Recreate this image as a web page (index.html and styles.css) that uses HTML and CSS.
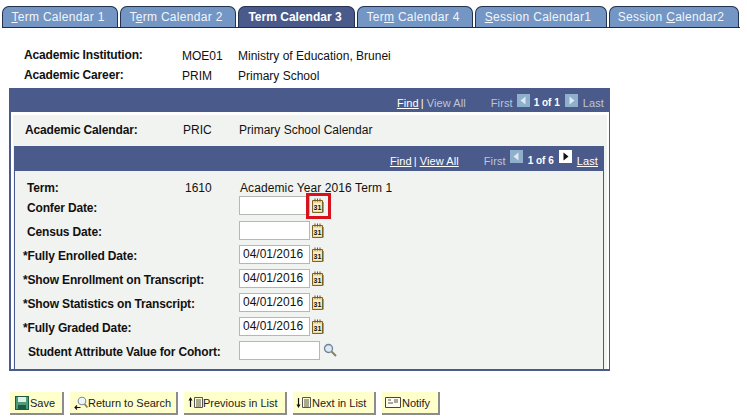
FILE: index.html
```html
<!DOCTYPE html>
<html lang="en">
<head>
<meta charset="utf-8">
<title>Term Calendar 3</title>
<link rel="stylesheet" href="styles.css">
</head>
<body>
<svg class="defs" width="0" height="0">
  <defs>
    <symbol id="cal" viewBox="0 0 12 15">
      <path d="M.5 2.500h10v12H.500z" fill="#f0d9a0" stroke="#7d6228"/>
      <path d="M11.500 4v10.500" stroke="#b89a5a"/>
      <path d="M3 .5v3M5.500 .5v3M8 .5v3" stroke="#6b5320"/>
      <rect x="1.500" y="5" width="8" height="8" fill="#fbeec6"/>
      <text x="5.500" y="12" text-anchor="middle" class="cal-num">31</text>
    </symbol>
  </defs>
</svg>
<nav class="tabs">
  <a class="tab t1"><u>T</u>erm Calendar 1</a>
  <a class="tab t2">T<u>e</u>rm Calendar 2</a>
  <a class="tab t3 active">Term Calendar 3</a>
  <a class="tab t4">Ter<u>m</u> Calendar 4</a>
  <a class="tab t5"><u>S</u>ession Calendar1</a>
  <a class="tab t6">Session <u>C</u>alendar2</a>
</nav>

<section class="summary">
  <div class="sum-row"><b class="sum-label">Academic Institution:</b><span class="sum-code">MOE01</span><span>Ministry of Education, Brunei</span></div>
  <div class="sum-row"><b class="sum-label">Academic Career:</b><span class="sum-code">PRIM</span><span>Primary School</span></div>
</section>

<section class="outer">
  <div class="bar outer-bar">
    <u class="link">Find</u><span class="sep">|</span><span class="dim">View All</span>
    <span class="dim first">First</span>
    <span class="arrow off"><svg width="13" height="13" viewBox="0 0 13 13"><path d="M8.500 2.500v8L3.500 6.500z" fill="#dfe9f2"/></svg></span>
    <b class="count">1 of 1</b>
    <span class="arrow off"><svg width="13" height="13" viewBox="0 0 13 13"><path d="M4.500 2.500v8l5-4z" fill="#dfe9f2"/></svg></span>
    <span class="dim last">Last</span>
  </div>
  <div class="calendar">
    <div class="cal-head"><b class="cal-label">Academic Calendar:</b><span class="cal-code">PRIC</span><span>Primary School Calendar</span></div>
    <div class="inner">
      <div class="bar inner-bar">
        <u class="link">Find</u><span class="sep">|</span><u class="link">View All</u>
        <span class="dim first">First</span>
        <span class="arrow off"><svg width="13" height="13" viewBox="0 0 13 13"><path d="M8.500 2.500v8L3.500 6.500z" fill="#dfe9f2"/></svg></span>
        <b class="count">1 of 6</b>
        <span class="arrow on"><svg width="13" height="13" viewBox="0 0 13 13"><path d="M4.500 2.500v8l5-4z" fill="#111"/></svg></span>
        <u class="link last">Last</u>
      </div>
      <div class="term-row"><b class="f-term">Term:</b><span class="term-code">1610</span><span class="term-name">Academic Year 2016 Term 1</span></div>
      <div class="row confer"><b class="lab in4">Confer Date:</b><input class="date" type="text"><svg class="cal-ico"><use href="#cal"/></svg></div>
      <div class="row"><b class="lab in4">Census Date:</b><input class="date" type="text"><svg class="cal-ico"><use href="#cal"/></svg></div>
      <div class="row"><b class="lab">*Fully Enrolled Date:</b><input class="date" type="text" value="04/01/2016"><svg class="cal-ico"><use href="#cal"/></svg></div>
      <div class="row"><b class="lab">*Show Enrollment on Transcript:</b><input class="date" type="text" value="04/01/2016"><svg class="cal-ico"><use href="#cal"/></svg></div>
      <div class="row"><b class="lab">*Show Statistics on Transcript:</b><input class="date" type="text" value="04/01/2016"><svg class="cal-ico"><use href="#cal"/></svg></div>
      <div class="row"><b class="lab">*Fully Graded Date:</b><input class="date" type="text" value="04/01/2016"><svg class="cal-ico"><use href="#cal"/></svg></div>
      <div class="row"><b class="lab in5">Student Attribute Value for Cohort:</b><input class="cohort" type="text">
        <svg class="lens" width="14" height="14" viewBox="0 0 14 14"><circle cx="5.500" cy="5.500" r="4" fill="#dbe9f4" stroke="#6d8296" stroke-width="1.300"/><path d="M8.500 8.500l4.500 4.500" stroke="#8a8060" stroke-width="2"/></svg>
      </div>
      <span class="highlight"></span>
    </div>
  </div>
</section>

<footer class="actions">
  <button class="btn save"><svg width="14" height="14" viewBox="0 0 14 14"><rect x=".5" y=".5" width="13" height="13" fill="#4f9a78" stroke="#1d5a45"/><rect x="3" y="1" width="8" height="5" fill="#dff0e6"/><rect x="3" y="9" width="8" height="4.500" fill="#1d5a45"/></svg>Save</button>
  <button class="btn ret"><svg width="14" height="14" viewBox="0 0 14 14"><circle cx="8" cy="5" r="3.800" fill="#eef4fa" stroke="#7b8ea0" stroke-width="1.100"/><path d="M10.500 8l3 3.500" stroke="#8a8060" stroke-width="1.800"/><path d="M6.500 11.500H1M3 9.500l-2 2 2 2" fill="none" stroke="#111" stroke-width="1.100"/></svg>Return to Search</button>
  <button class="btn prev"><svg width="15" height="13" viewBox="0 0 15 13"><path d="M2.500 11V3" fill="none" stroke="#111" stroke-width="1.200"/><path d="M.5 4.500L2.500 1l2 3.500z" fill="#111"/><path d="M6.500 1.500h8v10h-8zM8 4h5M8 6h5M8 8h5M8 10h5" fill="none" stroke="#555"/></svg>Previous in List</button>
  <button class="btn next"><svg width="15" height="13" viewBox="0 0 15 13"><path d="M2.500 2v8" fill="none" stroke="#111" stroke-width="1.200"/><path d="M.5 8.500l2 3.500 2-3.500z" fill="#111"/><path d="M6.500 1.500h8v10h-8zM8 4h5M8 6h5M8 8h5M8 10h5" fill="none" stroke="#555"/></svg>Next in List</button>
  <button class="btn notify"><svg width="16" height="13" viewBox="0 0 16 13"><path d="M.5 1.500h15v10H.500z" fill="#fffff0" stroke="#444"/><path d="M3 4h3M3 7h5M9 4h4M9 6h4" stroke="#555"/></svg>Notify</button>
</footer>
</body>
</html>
```
FILE: styles.css
```css
* { box-sizing: border-box; }
html, body { margin: 0; padding: 0; }
body {
  width: 747px;
  height: 419px;
  overflow: hidden;
  background: #fff;
  color: #111;
  font: 12px/14px "Liberation Sans", Arial, sans-serif;
}
b { letter-spacing: -0.16px; }
.defs { display: block; height: 0; }
.cal-num { font: bold 7px "Liberation Sans", sans-serif; fill: #111; letter-spacing: 0; }

.tabs {
  display: flex;
  height: 28px;
  margin: 0 7px 0 2px;
  padding-top: 6px;
  border-bottom: 1px solid #1c2c50;
}
.tab {
  height: 21px;
  margin-right: 2px;
  padding: 3px 4px 0 0;
  text-align: center;
  color: #f2f5fa;
  background: #7396c5;
  border: 1px solid #22324f;
  border-bottom: 0;
  border-radius: 7px 7px 0 0;
  font-size: 12px;
  letter-spacing: 0.3px;
}
.t1 { width: 116px; }
.t2 { width: 116px; }
.t3 { width: 117px; padding-right: 3px; }
.t4 { width: 116px; }
.t5 { width: 132px; padding-right: 6px; }
.t6 { width: 130px; margin-right: 0; padding-right: 6px; }
.tab.active { background: #4a5a8a; color: #fff; font-weight: bold; letter-spacing: 0; }

.summary { margin: 20px 0 0 24px; height: 40px; }
.sum-row { display: flex; height: 20px; }
.sum-label { width: 158px; }
.sum-code { width: 56px; padding-top: 1px; }
.sum-row span:last-child { padding-top: 1px; }

.outer {
  width: 601px;
  height: 283px;
  margin-left: 9px;
  border: 2px solid #4a5a8a;
  border-top: 0;
  border-right-width: 1px;
  background: #fff;
}
.bar {
  display: flex;
  align-items: center;
  justify-content: flex-end;
  background: #4a5a8a;
  color: #fff;
  font-size: 11px;
  letter-spacing: 0.1px;
}
.outer-bar { height: 24px; padding: 6px 5px 0 0; }
.inner-bar { height: 25px; padding: 5px 5px 0 0; }
.link { color: #fff; }
.sep { margin: 0 3px 0 2px; }
.dim { color: #bcc6d8; }
.first { margin-left: 25px; margin-right: 4px; }
.arrow {
  display: flex;
  width: 13px;
  height: 13px;
}
.outer-bar .arrow { margin-top: -6px; }
.inner-bar .arrow { margin-top: -10px; }
.arrow.off { background: #8fb0cc; }
.arrow.on { background: #fff; }
.count { margin: 0 5px; color: #fff; font-size: 10px; letter-spacing: 0; }
.outer-bar .count { margin-left: 4px; }
.last { margin-left: 5px; }
.calendar {
  margin: 3px 2px 0 2px;
  height: 254px;
  background: #f1f3f0;
}
.cal-head { display: flex; height: 31px; padding: 8px 0 0 12px; }
.cal-label { width: 158px; }
.cal-code { width: 56px; }
.inner {
  position: relative;
  width: 590px;
  height: 225px;
  margin-left: 1px;
  border: 1px solid #4a5a8a;
  border-top: 0;
}
.term-row { display: flex; padding: 10px 0 0 12px; box-sizing: content-box; height: 14px; }
.f-term { width: 158px; }
.term-code { width: 55px; }
.term-name { letter-spacing: 0.1px; }
.row {
  display: flex;
  align-items: center;
  height: 24px;
  padding-left: 8px;
}
.confer { margin-top: -2px; height: 25px; }
.lab { width: 216px; padding-top: 4px; }
.in4 { padding-left: 4px; }
.in5 { padding-left: 5px; }
input {
  height: 19px;
  padding: 0 3px;
  border: 1px solid #b5b8b5;
  background: #fff;
  color: #111;
  font: 12px "Liberation Sans", sans-serif;
}
.date { width: 71px; }
.cohort { width: 81px; }
.cal-ico { width: 12px; height: 15px; margin-left: 2px; }
.lens { margin-left: 3px; }
.highlight {
  position: absolute;
  left: 291px;
  top: 47px;
  width: 25px;
  height: 26px;
  border: 3px solid #d8121c;
}

.actions {
  display: flex;
  gap: 6px;
  margin: 21px 0 0 10px;
}
.btn {
  display: flex;
  align-items: center;
  gap: 1px;
  height: 23px;
  padding: 0 0 0 5px;
  background: #ffffcc;
  color: #222;
  border: 0;
  border-right: 2px solid #8c8c8c;
  border-bottom: 2px solid #8c8c8c;
  font: 11px "Liberation Sans", sans-serif;
}
.save { width: 54px; gap: 1px; }
.ret { width: 108px; padding-left: 4px; gap: 0; }
.prev { width: 103px; padding-left: 4px; gap: 0; }
.next { width: 83px; padding-left: 3px; gap: 1px; }
.notify { width: 58px; padding-left: 3px; gap: 1px; }
```
